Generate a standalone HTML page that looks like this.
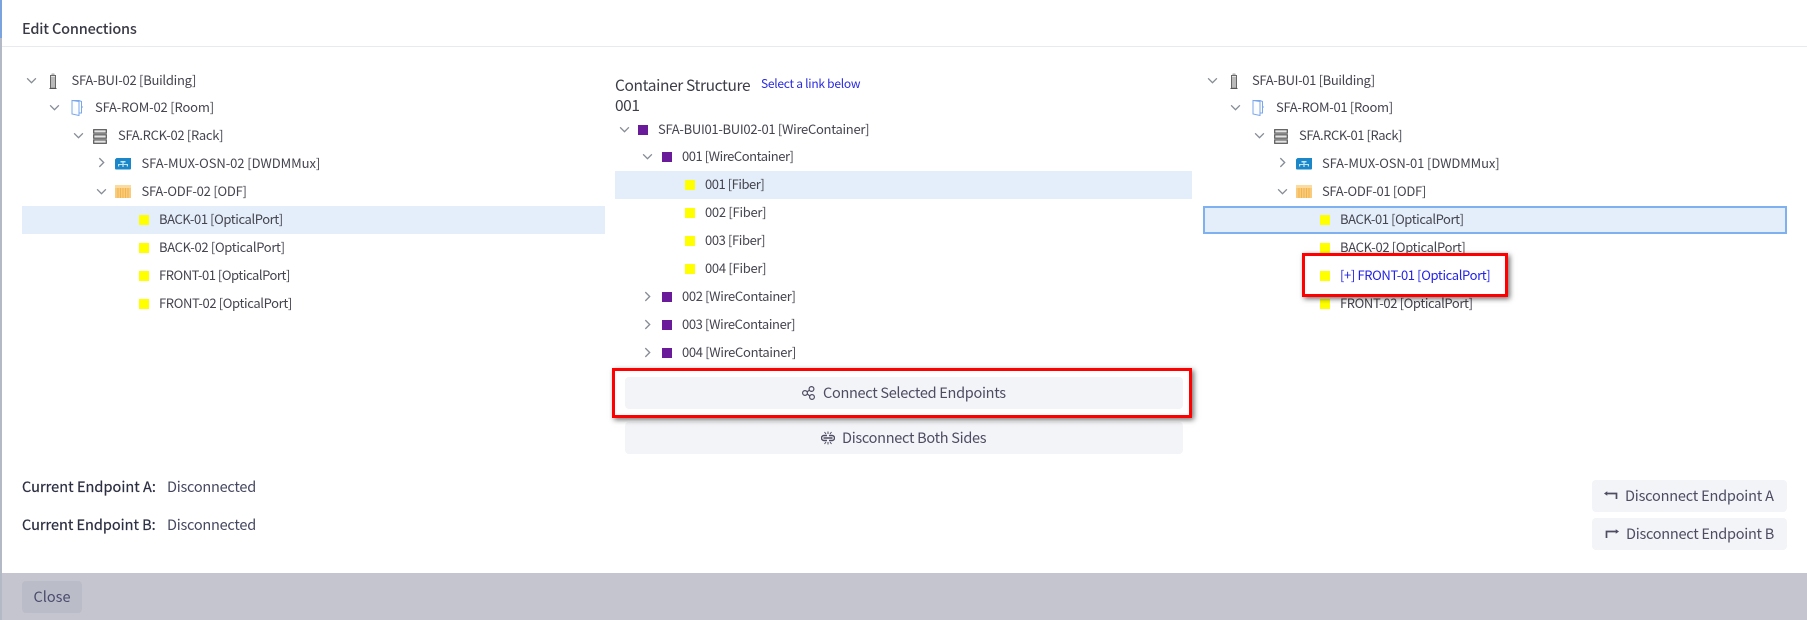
<!DOCTYPE html>
<html><head><meta charset="utf-8"><style>
html,body{margin:0;padding:0;background:#fff}
#p{position:relative;width:1807px;height:620px;overflow:hidden;background:#fff;color:#4a4a55}
#p,.t,.b{font-family:"Noto Sans CJK JP","Liberation Sans",sans-serif}
.t{position:absolute;white-space:nowrap;line-height:20px;font-size:13px;color:#45454f}
.s{position:absolute;width:10px;height:10px;background:#ffff00}
.c{position:absolute;width:10px;height:10px;background:#6a1b9a}
.a,.i{position:absolute}
.h{position:absolute;background:#e4eefb}
.b{position:absolute;background:#f3f4f7;border-radius:4px;height:32px;line-height:32px;color:#4d4c63;font-size:14.5px;white-space:nowrap}
.r{position:absolute;border:3px solid #f00;box-shadow:2px 2px 5px rgba(0,0,0,.55);box-sizing:border-box}
</style></head><body><div id="p">
<svg width="0" height="0" style="position:absolute"><defs>
<symbol id="d" viewBox="0 0 12 8"><path d="M1 1.500L6 6.500L11 1.500" fill="none" stroke="#868c95" stroke-width="1.500"/></symbol>
<symbol id="e" viewBox="0 0 8 12"><path d="M1.500 1L6.500 6L1.500 11" fill="none" stroke="#868c95" stroke-width="1.500"/></symbol>
<symbol id="bld" viewBox="0 0 8 16"><path d="M1.500 2.500h5V15h-5z" fill="#e2e2e2" stroke="#666" stroke-width="1"/><path d="M2 5h4M2 7h4M2 9h4M2 11h4M2 13h4" stroke="#777" stroke-width=".8"/><path d="M3 2.500V1h2v1.500" fill="none" stroke="#888" stroke-width=".8"/><path d="M0.500 15.500h7" stroke="#555"/></symbol>
<symbol id="room" viewBox="0 0 12 17"><path d="M1 1.500h7l2.500 1V14H8M1 1.500V15l7 1.500V2.500L1 1.500z" fill="#fbfcff" stroke="#7ba7ea" stroke-width="1"/><path d="M10.500 8h1.500" stroke="#7ba7ea"/></symbol>
<symbol id="rack" viewBox="0 0 14 15"><g fill="#e4e4e4" stroke="#555" stroke-width="1.200"><rect x=".7" y=".7" width="12.600" height="3.400"/><rect x=".7" y="5.800" width="12.600" height="3.400"/><rect x=".7" y="10.900" width="12.600" height="3.400"/></g></symbol>
<symbol id="mux" viewBox="0 0 16 12"><path d="M1.500 0H16V10.500a1 1 0 0 1-1 1H1a1 1 0 0 1-1-1V1.500z" fill="#1b87c9"/><path d="M5.500 3h5v1.500h-5zM3 6h10v1H3zM7.400 4.500h1.200V9H7.400zM3 7h1.200v1.500H3zM11.800 7H13v1.500h-1.200z" fill="#bfe3f7"/></symbol>
<symbol id="odf" viewBox="0 0 16 13"><rect width="16" height="13" fill="#f8cc7c"/><rect width="16" height="3" fill="#fbdc9e"/><path d="M3 3v10M5.500 3v10M8 3v10M10.500 3v10M13 3v10" stroke="#f0b044" stroke-width=".8"/></symbol>
</defs></svg>

<div class="a" style="left:0;top:0;width:2px;height:620px;background:#b4b9c6"></div>
<div class="a" style="left:0;top:0;width:2px;height:38px;background:#7ba3dd"></div>
<div class="a" style="left:2px;top:46px;width:1805px;height:1px;background:#e8eaee"></div>
<div class="t" style="--w:114.7;left:22px;top:19px;font-size:14.500px;font-weight:500;color:#3a3a46">Edit Connections</div>

<!-- LEFT -->
<div class="h" style="left:22px;top:206px;width:583px;height:28px"></div>
<svg class="i" style="left:26px;top:77px" width="11" height="7"><use href="#d"/></svg>
<svg class="i" style="left:49px;top:73px" width="8" height="16"><use href="#bld"/></svg>
<div class="t" style="--w:124.6;left:71.500px;top:70px">SFA-BUI-02 [Building]</div>
<svg class="i" style="left:49px;top:104px" width="11" height="7"><use href="#d"/></svg>
<svg class="i" style="left:71px;top:99px" width="12" height="17"><use href="#room"/></svg>
<div class="t" style="--w:119;left:95px;top:97px">SFA-ROM-02 [Room]</div>
<svg class="i" style="left:73px;top:132px" width="11" height="7"><use href="#d"/></svg>
<svg class="i" style="left:93px;top:129px" width="14" height="15"><use href="#rack"/></svg>
<div class="t" style="--w:105.2;left:118px;top:125px">SFA.RCK-02 [Rack]</div>
<svg class="i" style="left:98px;top:157px" width="7" height="11"><use href="#e"/></svg>
<svg class="i" style="left:115px;top:158px" width="16" height="12"><use href="#mux"/></svg>
<div class="t" style="--w:178.7;left:141.500px;top:153px">SFA-MUX-OSN-02 [DWDMMux]</div>
<svg class="i" style="left:96px;top:188px" width="11" height="7"><use href="#d"/></svg>
<svg class="i" style="left:115px;top:185px" width="16" height="13"><use href="#odf"/></svg>
<div class="t" style="--w:105.2;left:141.500px;top:181px">SFA-ODF-02 [ODF]</div>
<div class="s" style="left:139px;top:215px"></div><div class="t" style="--w:123.8;left:159px;top:209px">BACK-01 [OpticalPort]</div>
<div class="s" style="left:139px;top:243px"></div><div class="t" style="--w:125.7;left:159px;top:237px">BACK-02 [OpticalPort]</div>
<div class="s" style="left:139px;top:271px"></div><div class="t" style="--w:130.9;left:159px;top:265px">FRONT-01 [OpticalPort]</div>
<div class="s" style="left:139px;top:299px"></div><div class="t" style="--w:132.9;left:159px;top:293px">FRONT-02 [OpticalPort]</div>

<!-- MIDDLE -->
<div class="t" style="--w:135.2;left:615px;top:74.500px;font-size:15.500px;color:#3d3d48">Container Structure</div>
<div class="t" style="--w:99.2;left:761px;top:74px;font-size:12px;color:#2a2ae0">Select a link below</div>
<div class="t" style="--w:24.5;left:615px;top:94.500px;font-size:15.500px;color:#3d3d48">001</div>
<svg class="i" style="left:619px;top:126px" width="11" height="7"><use href="#d"/></svg>
<div class="c" style="left:638px;top:125px"></div><div class="t" style="--w:211.2;left:658px;top:119px">SFA-BUI01-BUI02-01 [WireContainer]</div>
<svg class="i" style="left:642px;top:153px" width="11" height="7"><use href="#d"/></svg>
<div class="c" style="left:662px;top:152px"></div><div class="t" style="--w:111.5;left:682px;top:146px">001 [WireContainer]</div>
<div class="h" style="left:615px;top:171px;width:577px;height:28px"></div>
<div class="s" style="left:685px;top:180px"></div><div class="t" style="--w:59.3;left:705px;top:174px">001 [Fiber]</div>
<div class="s" style="left:685px;top:208px"></div><div class="t" style="--w:61.3;left:705px;top:202px">002 [Fiber]</div>
<div class="s" style="left:685px;top:236px"></div><div class="t" style="--w:60.1;left:705px;top:230px">003 [Fiber]</div>
<div class="s" style="left:685px;top:264px"></div><div class="t" style="--w:61.3;left:705px;top:258px">004 [Fiber]</div>
<svg class="i" style="left:644px;top:291px" width="7" height="11"><use href="#e"/></svg>
<div class="c" style="left:662px;top:292px"></div><div class="t" style="--w:113.5;left:682px;top:286px">002 [WireContainer]</div>
<svg class="i" style="left:644px;top:319px" width="7" height="11"><use href="#e"/></svg>
<div class="c" style="left:662px;top:320px"></div><div class="t" style="--w:113.1;left:682px;top:314px">003 [WireContainer]</div>
<svg class="i" style="left:644px;top:347px" width="7" height="11"><use href="#e"/></svg>
<div class="c" style="left:662px;top:348px"></div><div class="t" style="--w:113.9;left:682px;top:342px">004 [WireContainer]</div>

<div class="b" style="left:625px;top:422px;width:558px"></div>
<div class="r" style="left:612px;top:368px;width:580px;height:50px"></div>
<div class="b" style="left:625px;top:377px;width:558px"></div>
<div class="t" style="--w:182.7;left:823px;top:383px;font-size:14.500px;color:#4d4c63">Connect Selected Endpoints</div>
<svg class="i" style="left:802px;top:386px" width="14" height="14" viewBox="0 0 14 14" fill="none" stroke="#4d4c63" stroke-width="1.200"><circle cx="9.500" cy="3" r="2.400"/><circle cx="3" cy="7" r="2.400"/><circle cx="10" cy="11" r="2.400"/><path d="M5.100 5.800L7.400 4.300M5.200 8L7.800 9.900"/></svg>
<div class="t" style="--w:144.3;left:842px;top:428px;font-size:14.500px;color:#4d4c63">Disconnect Both Sides</div>
<svg class="i" style="left:821px;top:431px" width="14" height="14" viewBox="0 0 14 14" fill="none" stroke="#4d4c63" stroke-width="1.400"><path d="M6 4.500H3a2.300 2.300 0 0 0 0 5h3M8 4.500h3a2.300 2.300 0 0 1 0 5H8M2.500 7h9"/><path d="M7 .5v2.500M7 11v2.500M3.500 1L5 3M10.500 1L9 3M3.500 13L5 11M10.500 13L9 11" stroke-width="1"/></svg>

<!-- RIGHT -->
<div class="a" style="left:1203px;top:206px;width:584px;height:28px;box-sizing:border-box;background:#e4eefb;border:2px solid #7fb1f0"></div>
<svg class="i" style="left:1207px;top:77px" width="11" height="7"><use href="#d"/></svg>
<svg class="i" style="left:1230px;top:73px" width="8" height="16"><use href="#bld"/></svg>
<div class="t" style="--w:122.8;left:1252px;top:70px">SFA-BUI-01 [Building]</div>
<svg class="i" style="left:1230px;top:104px" width="11" height="7"><use href="#d"/></svg>
<svg class="i" style="left:1252px;top:99px" width="12" height="17"><use href="#room"/></svg>
<div class="t" style="--w:116.9;left:1276px;top:97px">SFA-ROM-01 [Room]</div>
<svg class="i" style="left:1254px;top:132px" width="11" height="7"><use href="#d"/></svg>
<svg class="i" style="left:1274px;top:129px" width="14" height="15"><use href="#rack"/></svg>
<div class="t" style="--w:103.1;left:1299px;top:125px">SFA.RCK-01 [Rack]</div>
<svg class="i" style="left:1279px;top:157px" width="7" height="11"><use href="#e"/></svg>
<svg class="i" style="left:1296px;top:158px" width="16" height="12"><use href="#mux"/></svg>
<div class="t" style="--w:177.5;left:1322px;top:153px">SFA-MUX-OSN-01 [DWDMMux]</div>
<svg class="i" style="left:1277px;top:188px" width="11" height="7"><use href="#d"/></svg>
<svg class="i" style="left:1296px;top:185px" width="16" height="13"><use href="#odf"/></svg>
<div class="t" style="--w:103.9;left:1322px;top:181px">SFA-ODF-01 [ODF]</div>
<div class="s" style="left:1320px;top:215px"></div><div class="t" style="--w:123.6;left:1340px;top:209px">BACK-01 [OpticalPort]</div>
<div class="s" style="left:1320px;top:243px"></div><div class="t" style="--w:125.5;left:1340px;top:237px">BACK-02 [OpticalPort]</div>
<div class="s" style="left:1320px;top:299px"></div><div class="t" style="--w:132.6;left:1340px;top:293px">FRONT-02 [OpticalPort]</div>
<div class="a" style="left:1302px;top:253px;width:206px;height:44px;background:#fff"></div>
<div class="r" style="left:1302px;top:253px;width:206px;height:44px"></div>
<div class="s" style="left:1320px;top:271px"></div><div class="t" style="--w:150.3;left:1340px;top:265px;color:#2323e6">[+] FRONT-01 [OpticalPort]</div>

<!-- BOTTOM -->
<div class="t" style="--w:134;left:22px;top:477px;font-size:14.500px;color:#2c2f42;-webkit-text-stroke:.2px #2c2f42">Current Endpoint A:</div>
<div class="t" style="--w:89;left:167px;top:477px;font-size:14.500px;color:#454860">Disconnected</div>
<div class="t" style="--w:133.7;left:22px;top:515px;font-size:14.500px;color:#2c2f42;-webkit-text-stroke:.2px #2c2f42">Current Endpoint B:</div>
<div class="t" style="--w:89;left:167px;top:515px;font-size:14.500px;color:#454860">Disconnected</div>

<div class="b" style="left:1592px;top:480px;width:195px"></div>
<div class="t" style="--w:148.7;left:1625px;top:486px;font-size:14.500px;color:#4d4c63">Disconnect Endpoint A</div>
<svg class="i" style="left:1604px;top:490px" width="14" height="12" viewBox="0 0 14 12" fill="none" stroke="#4d4c63" stroke-width="1.700"><path d="M2 3.500H12.500V9"/><path d="M0.500 3.500L3 1.800V5.200z" fill="#4d4c63" stroke-width=".6"/></svg>
<div class="b" style="left:1592px;top:518px;width:195px"></div>
<div class="t" style="--w:148;left:1626px;top:524px;font-size:14.500px;color:#4d4c63">Disconnect Endpoint B</div>
<svg class="i" style="left:1605px;top:528px" width="14" height="12" viewBox="0 0 14 12" fill="none" stroke="#4d4c63" stroke-width="1.700"><path d="M1.500 10V3.500H11"/><path d="M13.500 3.500L11 1.800V5.200z" fill="#4d4c63" stroke-width=".6"/></svg>

<div class="a" style="left:2px;top:573px;width:1805px;height:47px;background:#c5c5cf"></div>
<div class="b" style="left:22px;top:581px;width:60px;background:#babcc8;text-align:center;color:#4b4b6e">Close</div>
</div>
<script>
document.querySelectorAll('.t').forEach(function(e){
  var w=parseFloat(e.style.getPropertyValue('--w'));
  if(!w)return;
  var n=e.textContent.length;
  var m=e.getBoundingClientRect().width;
  e.style.letterSpacing=((w-m)/n).toFixed(3)+'px';
});
</script>
</body></html>
